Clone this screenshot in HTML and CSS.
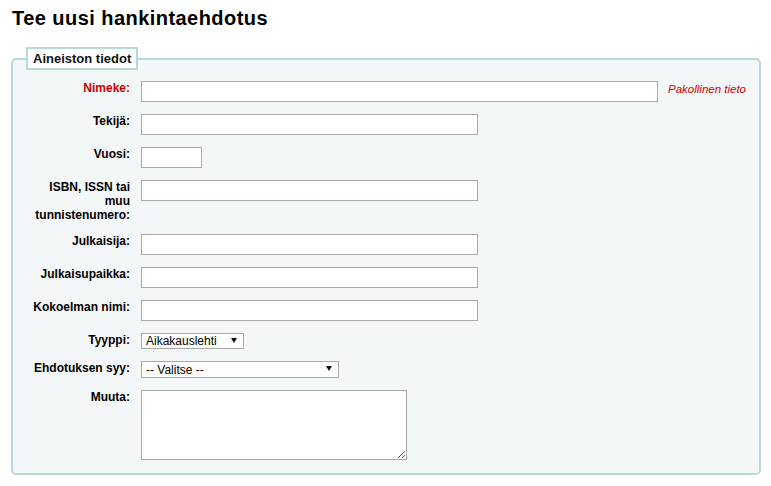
FILE: index.html
```html
<!DOCTYPE html>
<html lang="fi">
<head>
<meta charset="utf-8">
<title>Tee uusi hankintaehdotus</title>
<link rel="stylesheet" href="styles.css">
</head>
<body>
<div class="page">
  <h1 class="title">Tee uusi hankintaehdotus</h1>
  <fieldset class="box">
    <legend class="legend">Aineiston tiedot</legend>
    <div class="rows">
      <div class="row">
        <label class="label required" for="title">Nimeke:</label>
        <input class="field wide" id="title" type="text">
        <span class="req-note">Pakollinen tieto</span>
      </div>
      <div class="row">
        <label class="label" for="author">Tekijä:</label>
        <input class="field mid" id="author" type="text">
      </div>
      <div class="row">
        <label class="label" for="year">Vuosi:</label>
        <input class="field small" id="year" type="text">
      </div>
      <div class="row">
        <label class="label" for="isbn">ISBN, ISSN tai muu tunnistenumero:</label>
        <input class="field mid" id="isbn" type="text">
      </div>
      <div class="row">
        <label class="label" for="publisher">Julkaisija:</label>
        <input class="field mid" id="publisher" type="text">
      </div>
      <div class="row">
        <label class="label" for="place">Julkaisupaikka:</label>
        <input class="field mid" id="place" type="text">
      </div>
      <div class="row">
        <label class="label" for="collection">Kokoelman nimi:</label>
        <input class="field mid" id="collection" type="text">
      </div>
      <div class="row">
        <label class="label" for="type">Tyyppi:</label>
        <div class="select-wrap">
          <select class="select sel-type" id="type"><option>Aikakauslehti</option></select>
          <svg class="arrow" width="6" height="5" viewBox="0 0 6 5"><polygon points="0,0 6,0 3,5" fill="#111"/></svg>
        </div>
      </div>
      <div class="row">
        <label class="label" for="reason">Ehdotuksen syy:</label>
        <div class="select-wrap">
          <select class="select sel-reason" id="reason"><option>-- Valitse --</option></select>
          <svg class="arrow" width="6" height="5" viewBox="0 0 6 5"><polygon points="0,0 6,0 3,5" fill="#111"/></svg>
        </div>
      </div>
      <div class="row">
        <label class="label" for="note">Muuta:</label>
        <textarea class="area" id="note"></textarea>
      </div>
    </div>
  </fieldset>
</div>
</body>
</html>
```
FILE: styles.css
```css
html, body {
  margin: 0;
  padding: 0;
  background: #ffffff;
}
body {
  font-family: "Liberation Sans", Arial, sans-serif;
  color: #000;
}
.page {
  padding: 0 10px 0 11px;
}
.title {
  margin: 7px 0 0 1px;
  font-size: 20px;
  line-height: 23px;
  font-weight: bold;
  letter-spacing: 0.45px;
}
.box {
  margin: 17px 0 0 0;
  padding: 11px 10px 13px 13px;
  border: 2px solid #b9d8d9;
  border-radius: 5px;
  background: #f4f7f8;
  min-inline-size: 0;
}
.legend {
  padding: 0 5px;
  border: 2px solid #b9d8d9;
  background: #ffffff;
  font-size: 13px;
  line-height: 19px;
  font-weight: bold;
  color: #111;
}
.rows {
  display: flex;
  flex-direction: column;
  gap: 12px;
}
.row {
  display: flex;
  align-items: flex-start;
}
.label {
  width: 104px;
  margin-right: 11px;
  text-align: right;
  font-size: 12px;
  line-height: 14px;
  font-weight: bold;
  flex: none;
}
.required {
  color: #cc0000;
}
.field {
  box-sizing: border-box;
  height: 21px;
  border: 1px solid #a9a9a9;
  background: #ffffff;
  padding: 1px 2px;
  margin: 0;
  font-family: "Liberation Sans", Arial, sans-serif;
  font-size: 12px;
  flex: none;
}
.wide { width: 517px; }
.mid { width: 337px; }
.small { width: 61px; }
.req-note {
  margin-left: 10px;
  font-size: 11.5px;
  line-height: 14px;
  font-style: italic;
  color: #cc0000;
  white-space: nowrap;
  padding-top: 1px;
}
.select-wrap {
  position: relative;
  flex: none;
}
.select {
  -webkit-appearance: none;
  appearance: none;
  display: block;
  box-sizing: border-box;
  height: 16px;
  margin: 0;
  padding: 0 0 0 4px;
  border: 1px solid #a9a9a9;
  border-radius: 0;
  background: #ffffff;
  font-family: "Liberation Sans", Arial, sans-serif;
  font-size: 12px;
  line-height: 14px;
  color: #000;
}
.sel-type { width: 103px; }
.sel-reason { width: 198px; height: 17px; }
.arrow {
  position: absolute;
  top: 5px;
  right: 7px;
}
.area {
  box-sizing: border-box;
  width: 266px;
  height: 70px;
  margin: 0;
  border: 1px solid #a9a9a9;
  background: #ffffff;
  flex: none;
}
```
